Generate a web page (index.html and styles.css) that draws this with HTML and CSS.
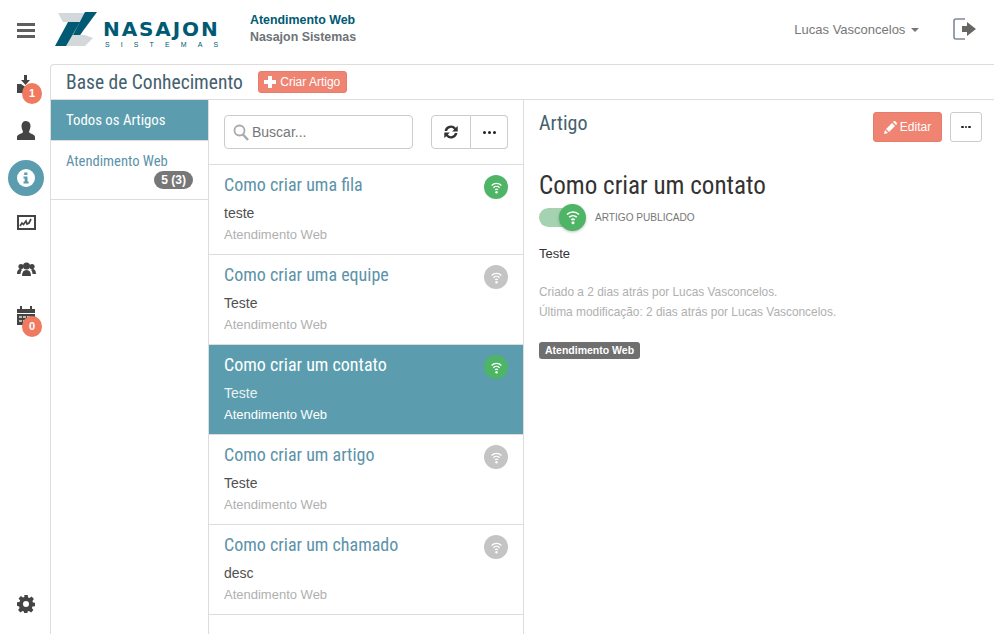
FILE: index.html
```html
<!DOCTYPE html>
<html lang="pt-BR">
<head>
	<meta charset="UTF-8">
	<title>Base de Conhecimento</title>
	<link rel="stylesheet" href="styles.css">
</head>
<body>
	<svg class="sprites" width="0" height="0">
		<symbol id="wifi" viewBox="0 0 16 16">
			<path d="M2 5.500a8.500 8.500 0 0 1 12 0M4.200 8.200a5.500 5.500 0 0 1 7.600 0M6.300 10.800a2.600 2.600 0 0 1 3.400 0" fill="none" stroke="currentColor" stroke-width="1.600"/>
			<circle cx="8" cy="13.800" r="1.500" fill="currentColor"/>
		</symbol>
	</svg>

	<header class="topbar">
		<div class="burger"><span></span><span></span><span></span></div>
		<div class="logo">
			<svg class="logo-mark" width="50" height="36" viewBox="0 0 50 36">
				<path d="M3 2H35L26 24H30L38 27L30 35H10L20 11H8z" fill="#d5d8da"/>
				<path d="M0 35L13 11H25L11 35z" fill="#005a73"/>
				<path d="M18 24L30 1H42L25 24z" fill="#005a73"/>
			</svg>
			<div class="logo-text">
				<span class="logo-name">NASAJON</span>
				<span class="logo-sub">SISTEMAS</span>
			</div>
		</div>
		<div class="app-name">
			<strong>Atendimento Web</strong>
			<span>Nasajon Sistemas</span>
		</div>
		<div class="user">Lucas Vasconcelos <i class="caret"></i></div>
		<svg class="logout" width="26" height="24" viewBox="0 0 26 24">
			<path d="M13 2H4a2 2 0 0 0-2 2v16a2 2 0 0 0 2 2h9" fill="none" stroke="#7b8a99" stroke-width="1.600"/>
			<path d="M10 9h5V5l9 7-9 7v-4h-5z" fill="#666"/>
		</svg>
	</header>

	<div class="app">
		<nav class="sidebar">
			<a class="side-item side-first">
				<svg width="20" height="20" viewBox="0 0 20 20"><path d="M8 1h3v5h3l-4.500 5L5 6h3zM1 10h4l4.500 3 4.500-3h5v9H1z" fill="#444"/></svg>
				<b class="count">1</b>
			</a>
			<a class="side-item">
				<svg width="18" height="19" viewBox="0 0 18 19"><path d="M9 0c3 0 4.500 2.200 4.500 5S12 10 12 11c0 1.500 6 2 6 5v3H0v-3c0-3 6-3.500 6-5 0-1-1.500-3-1.500-6S6 0 9 0z" fill="#444"/></svg>
			</a>
			<a class="side-item side-on">
				<svg width="18" height="18" viewBox="0 0 18 18"><circle cx="9" cy="9" r="9" fill="#fff"/><path d="M7.200 3.500h3.200v2.600H7.200zM6.500 7.500h4v5h1.200v2H6.500v-2h1.200v-3H6.500z" fill="#5b9dae"/></svg>
			</a>
			<a class="side-item">
				<svg width="19" height="15" viewBox="0 0 19 15"><path d="M1 1h17v13H1z" fill="none" stroke="#444" stroke-width="2"/><path d="M3 11l2-3 1.500 1.500L9 6l1 3 2-1 2-4" fill="none" stroke="#444" stroke-width="1.700"/></svg>
			</a>
			<a class="side-item side-team">
				<svg width="19" height="14" viewBox="0 0 19 14"><circle cx="9.500" cy="4" r="3.500" fill="#444"/><circle cx="4" cy="4.500" r="2.600" fill="#444"/><circle cx="15" cy="4.500" r="2.600" fill="#444"/><path d="M5 14c0-4 1.500-6 4.500-6s4.500 2 4.500 6zM0 12c0-3 1-5 4-5l1 1c-1 1-1.500 2.500-1.500 4zM19 12c0-3-1-5-4-5l-1 1c1 1 1.500 2.500 1.500 4z" fill="#444"/></svg>
			</a>
			<a class="side-item side-cal">
				<svg width="18" height="19" viewBox="0 0 18 19"><path d="M0 3h3V0h2v3h8V0h2v3h3v4H0zM0 8h18v11H0z" fill="#444"/><path d="M2 10h3v2H2zM6 10h3v2H6zM10 10h3v2h-3zM2 14h3v2H2zM6 14h3v2H6z" fill="#bbb"/></svg>
				<b class="count">0</b>
			</a>
			<a class="side-item side-gear">
				<svg width="18" height="18" viewBox="0 0 18 18"><path fill-rule="evenodd" d="M7.300 0h3.400l.4 2.500 1.400.6 2.100-1.500 2.300 2.300-1.500 2.100.6 1.400 2 .4v3.400l-2.500.4-.6 1.400 1.500 2.100-2.300 2.300-2.100-1.500-1.400.6-.4 2.500H7.300l-.4-2.500-1.400-.6-2.100 1.500-2.300-2.300 1.500-2.100-.6-1.400L0 10.700V7.300l2.500-.4.600-1.400-1.500-2.100 2.300-2.300 2.100 1.500 1.400-.6zM9 6a3 3 0 1 0 0 6 3 3 0 0 0 0-6z" fill="#444"/></svg>
			</a>
		</nav>

		<main class="panel">
			<div class="panel-head">
				<h1 class="cond">Base de Conhecimento</h1>
				<button class="btn-red btn-new"><svg width="12" height="12" viewBox="0 0 12 12"><path d="M4 0h4v4h4v4H8v4H4V8H0V4h4z" fill="#fff"/></svg> Criar Artigo</button>
			</div>
			<div class="panel-body">
				<aside class="cats">
					<div class="cat cat-on cond">Todos os Artigos</div>
					<div class="cat cat-web">
						<span class="cond">Atendimento Web</span>
						<em class="pill">5 (3)</em>
					</div>
				</aside>

				<section class="list">
					<div class="tools">
						<label class="search">
							<svg width="16" height="17" viewBox="0 0 16 17"><circle cx="6.500" cy="6.500" r="5" fill="none" stroke="#aaa" stroke-width="1.800"/><path d="M10 10.500l5 5.500" stroke="#aaa" stroke-width="2.500"/></svg>
							<span>Buscar...</span>
						</label>
						<div class="btn-group">
							<button class="btn-plain">
								<svg width="16" height="16" viewBox="0 0 15 15"><path d="M1.500 6.500A6 6 0 0 1 12 3.500l1.800-1.700V7H8.600l1.900-1.900a3.800 3.800 0 0 0-6.700 1.400zM13.500 8.500A6 6 0 0 1 3 11.500l-1.800 1.700V8h5.200l-1.900 1.900a3.800 3.800 0 0 0 6.700-1.400z" fill="#333"/></svg>
							</button>
							<button class="btn-plain btn-dots"><i></i><i></i><i></i></button>
						</div>
					</div>

					<article class="item">
						<h3 class="cond">Como criar uma fila</h3>
						<p>teste</p>
						<small>Atendimento Web</small>
						<span class="dot dot-green"><svg width="13" height="13"><use href="#wifi"/></svg></span>
					</article>
					<article class="item">
						<h3 class="cond">Como criar uma equipe</h3>
						<p>Teste</p>
						<small>Atendimento Web</small>
						<span class="dot"><svg width="13" height="13"><use href="#wifi"/></svg></span>
					</article>
					<article class="item item-on">
						<h3 class="cond">Como criar um contato</h3>
						<p>Teste</p>
						<small>Atendimento Web</small>
						<span class="dot dot-green"><svg width="13" height="13"><use href="#wifi"/></svg></span>
					</article>
					<article class="item">
						<h3 class="cond">Como criar um artigo</h3>
						<p>Teste</p>
						<small>Atendimento Web</small>
						<span class="dot"><svg width="13" height="13"><use href="#wifi"/></svg></span>
					</article>
					<article class="item">
						<h3 class="cond">Como criar um chamado</h3>
						<p>desc</p>
						<small>Atendimento Web</small>
						<span class="dot"><svg width="13" height="13"><use href="#wifi"/></svg></span>
					</article>
				</section>

				<section class="detail">
					<div class="detail-head">
						<h2 class="cond">Artigo</h2>
						<button class="btn-red btn-edit"><svg width="13" height="13" viewBox="0 0 13 13"><path d="M0 13l1-4 3 3zM2 8l6-6 3 3-6 6zM9 1l1-1q.5-.3 1 0l2 2q.3.500 0 1l-1 1z" fill="#fff"/></svg> Editar</button>
						<button class="btn-plain btn-dots btn-more"><i></i><i></i><i></i></button>
					</div>
					<h1 class="detail-title cond">Como criar um contato</h1>
					<div class="status">
						<div class="toggle"><span class="knob"><svg width="16" height="16"><use href="#wifi"/></svg></span></div>
						<span>ARTIGO PUBLICADO</span>
					</div>
					<p class="body-text">Teste</p>
					<p class="meta">Criado a 2 dias atrás por Lucas Vasconcelos.<br>Última modificação: 2 dias atrás por Lucas Vasconcelos.</p>
					<span class="tag">Atendimento Web</span>
				</section>
			</div>
		</main>
	</div>
</body>
</html>
```

FILE: styles.css
```css
*{box-sizing:border-box;}
html,body{margin:0;padding:0;height:100%;}
body{width:994px;height:634px;overflow:hidden;background:#fff;font-family:"Liberation Sans",Arial,sans-serif;font-size:13px;color:#333;}
h1,h2,h3,p{margin:0;font-weight:normal;}
button{font-family:inherit;cursor:pointer;}
.sprites{position:absolute;}
.cond{font-family:Roboto,"Liberation Sans",sans-serif;font-stretch:condensed;}

.topbar{height:64px;display:flex;align-items:center;}
.burger{width:18px;margin:0 0 4px 17px;display:flex;flex-direction:column;gap:3px;}
.burger span{height:3px;background:#5f5f5f;}
.logo{display:flex;align-self:flex-start;margin:11px 0 0 20px;width:180px;}
.logo-text{display:flex;flex-direction:column;margin:6px 0 0 -2px;color:#005a73;}
.logo-name{font-family:"DejaVu Sans",sans-serif;font-weight:bold;font-size:20px;line-height:24px;letter-spacing:1.900px;}
.logo-sub{font-size:7px;line-height:8px;letter-spacing:11.100px;margin-left:2px;white-space:nowrap;}
.app-name{display:flex;flex-direction:column;font-size:12.4px;line-height:17px;font-weight:bold;margin:0 0 6px 15px;}
.app-name strong{color:#005a73;}
.app-name span{color:#6d7378;}
.user{margin:0 0 6px auto;color:#777;font-size:13px;}
.caret{display:inline-block;border:4px solid transparent;border-top-color:#777;border-bottom:0;margin-left:2px;vertical-align:middle;}
.logout{margin:0 16px 6px 33px;}

.app{display:flex;height:570px;}
.sidebar{width:50px;margin-top:-3px;display:flex;flex-direction:column;align-items:center;}
.side-item{position:relative;height:47px;width:36px;flex:none;display:flex;align-items:center;justify-content:center;margin-left:2px;}
.side-first{height:46px;}
.side-on{height:36px;border-radius:50%;background:#5b9dae;margin:6px 0 3px 2px;}
.side-team{height:46px;}
.side-gear{margin-top:auto;margin-bottom:7px;}
.count{position:absolute;left:14px;top:22px;width:20px;height:21px;border-radius:50%;background:#ef7a60;color:#fff;font-size:11px;line-height:21px;text-align:center;}
.side-cal .count{top:24px;}

.panel{flex:1;border:1px solid #ddd;border-right:0;border-bottom:0;border-radius:4px 0 0 0;display:flex;flex-direction:column;}
.panel-head{height:35px;border-bottom:1px solid #ddd;display:flex;align-items:center;padding-left:15px;gap:15px;flex:none;}
.panel-head h1{font-size:19.5px;color:#44606e;}
.btn-red{background:#ef8473;border:1px solid #e77c6a;color:#fff;border-radius:3px;}
.btn-new{height:22px;width:89px;font-size:12px;padding:0;display:flex;align-items:center;justify-content:center;gap:4px;}
.panel-body{flex:1;display:flex;min-height:0;}

.cats{width:158px;border-right:1px solid #ddd;flex:none;}
.cat{padding:0 15px;font-size:14.6px;}
.cat-on{height:41px;line-height:40px;background:#5b9dae;color:#fff;border-bottom:1px solid #ddd;font-size:14.8px;}
.cat-web{position:relative;height:59px;border-bottom:1px solid #ddd;color:#5b93a8;padding-top:12px;line-height:17px;}
.pill{position:absolute;right:15px;top:30px;height:18px;padding:0 7px;border-radius:9px;background:#777;color:#fff;font-style:normal;font-weight:bold;font-size:12px;line-height:18px;}

.list{width:315px;border-right:1px solid #ddd;flex:none;}
.tools{height:65px;border-bottom:1px solid #ddd;padding:15px 15px 0;display:flex;justify-content:space-between;}
.search{width:189px;height:34px;border:1px solid #ccc;border-radius:4px;display:flex;align-items:center;gap:3px;padding-left:8px;color:#777;font-size:14px;}
.btn-group{display:flex;}
.btn-plain{background:#fff;border:1px solid #ccc;border-radius:3px;padding:0;display:flex;align-items:center;justify-content:center;height:34px;}
.btn-group .btn-plain{width:40px;border-radius:4px 0 0 4px;}
.btn-group .btn-dots{width:37px;border-left:0;border-radius:0 4px 4px 0;}
.btn-dots{gap:2px;}
.btn-dots i{width:3px;height:3px;border-radius:50%;background:#222;}

.item{position:relative;height:90px;border-bottom:1px solid #ddd;padding:9px 15px 0;}
.item h3{font-size:18px;line-height:22px;color:#5b93a8;}
.item p{font-size:14px;line-height:18px;margin-top:8px;color:#505050;}
.item small{display:block;font-size:13px;line-height:16px;margin-top:5px;color:#b0b0b0;}
.item-on{background:#5b9dae;}
.item-on h3,.item-on small{color:#fff;}
.item-on p{color:#e8f1f4;}
.dot{position:absolute;right:15px;top:10px;width:24px;height:24px;border-radius:50%;background:#c4c4c4;color:#fff;display:flex;align-items:center;justify-content:center;}
.dot-green{background:#4fb566;}

.detail{flex:1;padding:0 12px 0 15px;}
.detail-head{display:flex;align-items:flex-start;height:62px;padding-top:12px;gap:8px;}
.detail-head h2{font-size:20px;line-height:22px;color:#44606e;margin-right:auto;}
.btn-edit{height:30px;width:69px;font-size:12px;padding:0;display:flex;align-items:center;justify-content:center;gap:3px;}
.btn-more{width:32px;height:30px;gap:1px;}
.btn-more i{width:2.500px;height:2.500px;}
.detail-title{font-size:25.100px;line-height:30px;margin-top:9px;color:#333;}
.status{display:flex;align-items:center;height:26px;margin-top:3px;font-size:10.100px;color:#777;gap:9px;}
.toggle{position:relative;width:36px;height:19px;border-radius:10px;background:#a5d3b1;}
.knob{position:absolute;right:-11px;top:-4px;width:27px;height:27px;border-radius:50%;background:#4fb566;color:#fff;display:flex;align-items:center;justify-content:center;box-shadow:0 1px 3px rgba(0,0,0,.25);}
.status span:last-child{margin-left:11px;}
.body-text{margin-top:15px;font-size:13px;line-height:18px;}
.meta{margin-top:19px;font-size:11.900px;line-height:20px;color:#b0b0b0;}
.tag{display:inline-block;margin-top:20px;height:17px;padding:0 6px;border-radius:3px;background:#6f6f6f;color:#fff;font-size:10.500px;font-weight:bold;line-height:17px;}
```
